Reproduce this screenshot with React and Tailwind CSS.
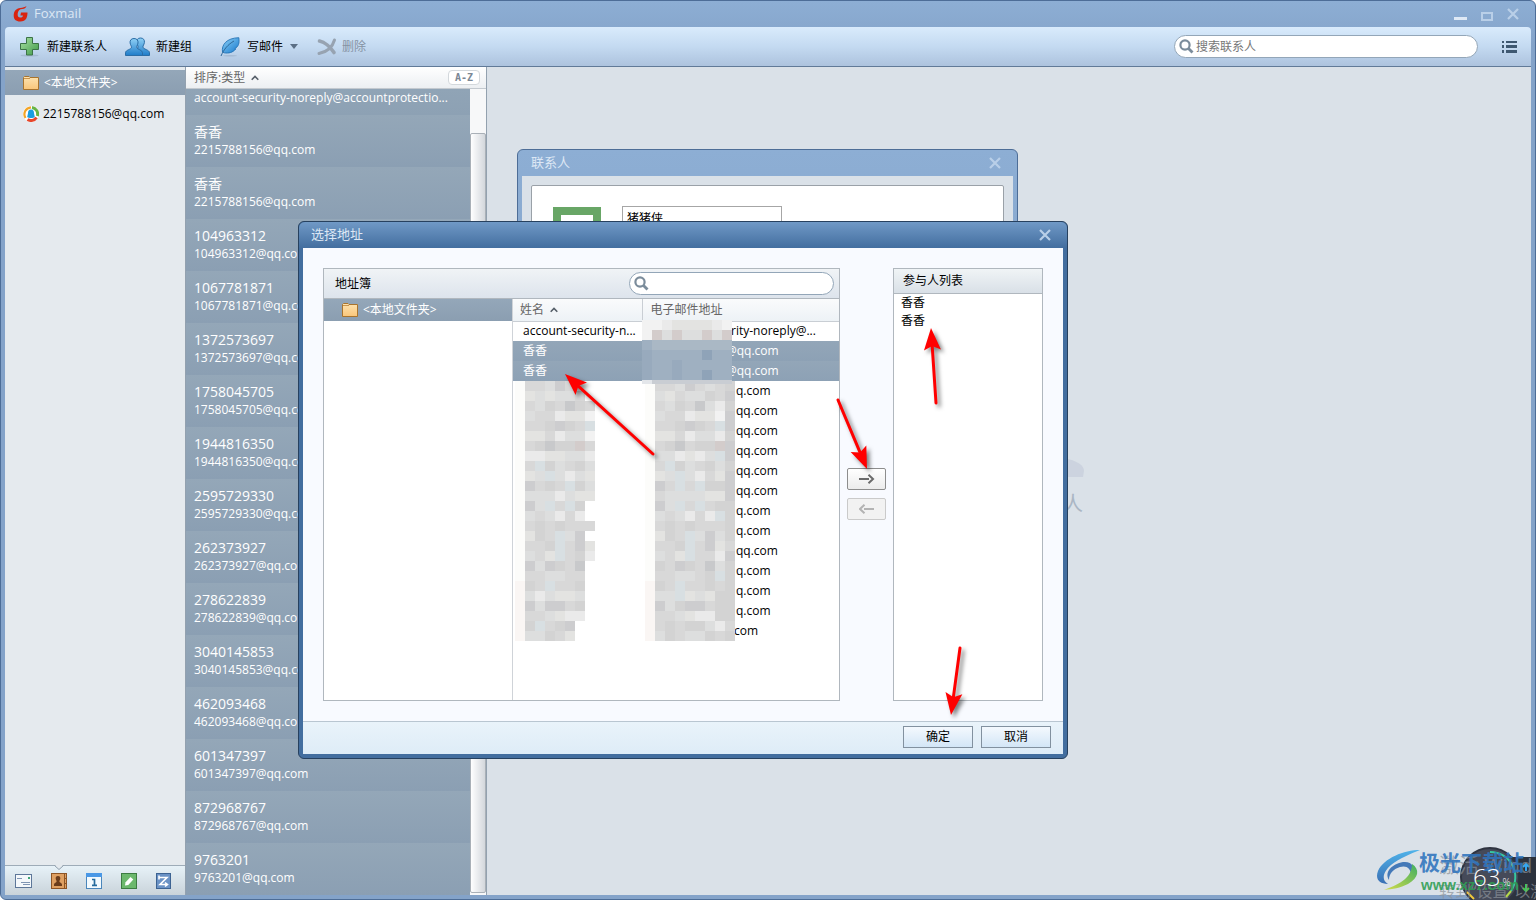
import { useState } from 'react';

const FONT = "font-['Open_Sans','Noto_Sans_CJK_SC',sans-serif]";

const contacts = [
  { name: '香香', mail: '2215788156@qq.com' },
  { name: '香香', mail: '2215788156@qq.com' },
  { name: '104963312', mail: '104963312@qq.com' },
  { name: '1067781871', mail: '1067781871@qq.com' },
  { name: '1372573697', mail: '1372573697@qq.com' },
  { name: '1758045705', mail: '1758045705@qq.com' },
  { name: '1944816350', mail: '1944816350@qq.com' },
  { name: '2595729330', mail: '2595729330@qq.com' },
  { name: '262373927', mail: '262373927@qq.com' },
  { name: '278622839', mail: '278622839@qq.com' },
  { name: '3040145853', mail: '3040145853@qq.com' },
  { name: '462093468', mail: '462093468@qq.com' },
  { name: '601347397', mail: '601347397@qq.com' },
  { name: '872968767', mail: '872968767@qq.com' },
  { name: '9763201', mail: '9763201@qq.com' },
];

const addressRows = [
  { name: 'account-security-n...', mail: 'rity-noreply@...', pad: 'pl-[89px]' },
  { name: '香香', mail: '@qq.com', pad: 'pl-[84px]', selected: true },
  { name: '香香', mail: '@qq.com', pad: 'pl-[84px]', selected: true },
  ...['q.com', 'qq.com', 'qq.com', 'qq.com', 'qq.com', 'qq.com', 'q.com', 'q.com', 'qq.com', 'q.com', 'q.com', 'q.com'].map(
    (mail) => ({ name: '', mail, pad: 'pl-[94px]' })
  ),
  { name: '', mail: 'com', pad: 'pl-[92px]' },
];

// Pixelated blocks that hide names and addresses, one letter per 10px cell
const shades = {
  a: '#fcfcfa', b: '#faf6f4', 0: '#c8c9cb', 1: '#cdcdcf', 2: '#d3d3d3', 3: '#d8d8d8', 4: '#dddede',
  5: '#e3e3e1', 6: '#eaeaea', 7: '#f2f2f2', p: '#d3cccb', c: '#d8dfe2',
  x: '#9fb0c1', y: '#98aabd', z: '#aab8c5', w: '#8fa3b8', v: '#a4b3c5', q: '#c9cdd3', r: '#e3e6ea',
};

const nameBlocks = [
  'a33413..', 'a545443.', 'a3423023', 'a4336557', 'a332123c', 'a5536447', 'a32022p3', 'a6655446',
  'a3c24324', 'a54c4645', 'a1323c24', 'a4446455', 'a14c3c2.', 'a434636.', 'a3232333', 'a523c41.',
  'a332c315', 'a435c326', 'a141230.', 'a334433.', 'b23c332.', 'b464554.', 'b141132.', 'b334566.',
  'b2c321..', 'b44235..',
];

const mailBlocks = [
  'a33413432', 'a45344231', 'a34230462', 'a43365571', 'a332123c1', 'a55364462', 'a320322p1', 'a446564c1',
  'a3c243242', 'a54c46351', 'a13c3c221', 'a34444551', 'a14c3c322', 'a434636c2', 'a32323332', 'a523c4142',
  'a332c3153', 'a435c3361', 'a23123042', 'a334432c2', 'b23c33232', 'b44c54522', 'b142113224', 'b334566221',
  'b32322463', 'b42344232',
].map((row) => row.slice(0, 9));

const headBlocks = ['776555567', '7p4p44p4p', 'xzzzzzzzz', 'yxxxxxwxx', 'yxxyxxxxx', 'yxxyxxwxx', 'rqqqqqqqq'];

function Blocks({ rows, height, className }) {
  return (
    <svg
      className={`absolute pointer-events-none ${className}`}
      width={rows[0].length * 10}
      height={height ?? rows.length * 10}
      shapeRendering="crispEdges"
      aria-hidden="true"
    >
      {rows.map((row, y) =>
        row.split('').map((s, x) =>
          s === '.' ? null : <rect key={`${x}-${y}`} x={x * 10} y={y * 10} width="10" height="10" fill={shades[s]} />
        )
      )}
    </svg>
  );
}

function CloseIcon() {
  return (
    <svg width="12" height="12" viewBox="0 0 12 12" stroke="#b9cfe8" strokeWidth="2.2" aria-hidden="true">
      <path d="M1 1l10 10M11 1L1 11" />
    </svg>
  );
}

function SearchIcon() {
  return (
    <svg width="15" height="15" viewBox="0 0 15 15" fill="none" stroke="#7b8c9b" strokeWidth="2.2" aria-hidden="true">
      <circle cx="6" cy="6" r="4.6" />
      <path d="M9.5 9.5l4 4" strokeWidth="2.8" />
    </svg>
  );
}

function FolderIcon() {
  return (
    <svg width="16" height="14" viewBox="0 0 16 14" aria-hidden="true">
      <defs>
        <linearGradient id="folder" x1="0" y1="0" x2="0" y2="1">
          <stop offset="0" stopColor="#fde3b0" />
          <stop offset="1" stopColor="#f9c67a" />
        </linearGradient>
      </defs>
      <path d="M.5 13.5V1.500l1-1h4.500l1 1h8.500v12z" fill="url(#folder)" stroke="#a8742e" />
      <path d="M1 2.500h6" stroke="#c9944d" />
    </svg>
  );
}

function SortCaret() {
  return (
    <svg width="8" height="6" viewBox="0 0 8 6" fill="none" stroke="#555e68" strokeWidth="1.600" aria-hidden="true">
      <path d="M.7 4.800L4 1.500l3.300 3.300" />
    </svg>
  );
}

function FoxmailLogo() {
  return (
    <svg width="16" height="16" viewBox="0 0 16 16" aria-hidden="true">
      <path
        d="M13.500 0c-.6 2.100-2 3-4.200 3.100C6.600 3.200 5 4.800 4.700 7.600c-.3 2.600.5 3.900 2.600 3.900 1.600 0 2.500-.6 2.700-2H7.400l.6-2.900h6.500c0 1.600-.2 4.200-1.200 6-1.100 2-3.200 2.900-6 2.900C2.700 15.500.6 13.300.7 9.500.8 5 3.200 2.300 7.200 1.900c2.700-.2 4.700-.6 6.300-1.900z"
        fill="#d9230f"
      />
    </svg>
  );
}

function PlusIcon() {
  return (
    <svg width="19" height="20" viewBox="0 0 19 20" aria-hidden="true">
      <defs>
        <linearGradient id="plus" x1="0" y1="0" x2="1" y2="1">
          <stop offset="0" stopColor="#a9e0a4" />
          <stop offset="1" stopColor="#3f9a48" />
        </linearGradient>
      </defs>
      <ellipse cx="9.500" cy="18.500" rx="9" ry="1" fill="#8fa6bd" opacity=".5" />
      <path d="M6.500 .5h6v6h6v6h-6v5.500h-6v-5.500h-6v-6h6z" fill="url(#plus)" stroke="#3c7346" />
    </svg>
  );
}

function PeopleIcon() {
  return (
    <svg width="25" height="20" viewBox="0 0 25 20" aria-hidden="true">
      <defs>
        <linearGradient id="people" x1="0" y1="0" x2="0" y2="1">
          <stop offset="0" stopColor="#8fd0f5" />
          <stop offset="1" stopColor="#1f7cc9" />
        </linearGradient>
      </defs>
      <g fill="url(#people)" stroke="#2b6da6">
        <path d="M15.500 1c-2.800 0-4.100 1.900-3.700 4.600.3 2 1.300 3 1.300 4.400 0 2-3.100 2.500-3.100 4.500v4h14.500v-2.800c0-2.900-6.600-3.500-6.600-5.700 0-1.400 1.200-2.400 1.500-4.400C19.800 2.900 18.300 1 15.500 1z" />
        <path d="M9 1.500C6.200 1.500 4.700 3.400 5.100 6c.3 2 1.400 3 1.400 4.200C6.500 12.500.5 12.800.5 15.800v2.700h17v-2.700c0-3.100-5.900-3.400-5.900-5.600 0-1.200 1.100-2.200 1.400-4.200.4-2.600-1.200-4.500-4-4.500z" />
      </g>
    </svg>
  );
}

function FeatherIcon() {
  return (
    <svg width="20" height="20" viewBox="0 0 20 20" aria-hidden="true">
      <defs>
        <linearGradient id="feather" x1="0" y1="0" x2="1" y2="1">
          <stop offset="0" stopColor="#8fd2f7" />
          <stop offset="1" stopColor="#1578cd" />
        </linearGradient>
      </defs>
      <ellipse cx="10" cy="18.700" rx="7" ry=".8" fill="#8fa6bd" opacity=".5" />
      <path d="M2.500 15C1.300 8 6.500 1 18.800.7c.8 5.500-.3 9-4 10.800l1 .4c-3 3.700-7.200 4.600-11.500 3.900z" fill="url(#feather)" stroke="#2473b4" strokeWidth=".9" />
      <path d="M1 19C4 12 8 7.500 14 4" fill="none" stroke="#2d6798" />
    </svg>
  );
}

function DeleteIcon() {
  return (
    <svg width="20" height="18" viewBox="0 0 20 18" fill="none" stroke="#97a3b1" strokeLinecap="round" aria-hidden="true">
      <path d="M2.500 3c5 1 11 6 14.500 11.500" strokeWidth="3.600" />
      <path d="M17.500 2c-2 7-8 12-15.500 13.500" strokeWidth="3" />
    </svg>
  );
}

function ToolButton({ icon, label, className, disabled, children }) {
  return (
    <button disabled={disabled} className={`flex items-center ${disabled ? 'text-[#8592a3]' : 'text-black'} ${className}`}>
      {icon}
      <span>{label}</span>
      {children}
    </button>
  );
}

function TitleBar() {
  return (
    <header className="flex h-[26px] shrink-0 items-center pl-2 pr-3 text-[13px] text-[#dce7f4]">
      <FoxmailLogo />
      <h1 className="ml-[5px]">Foxmail</h1>
      <div className="ml-auto flex items-center gap-3.5">
        <button aria-label="最小化" className="flex h-3 items-end">
          <span className="block h-[3px] w-[13px] bg-[#dfe9f5]" />
        </button>
        <button aria-label="最大化" className="mt-1 h-[9px] w-3 border-2 border-[#b9cfe8]" />
        <button aria-label="关闭">
          <CloseIcon />
        </button>
      </div>
    </header>
  );
}

function Toolbar() {
  return (
    <div className="flex h-10 shrink-0 items-center rounded-t-sm border-b border-[#617a98] bg-linear-to-b from-[#d9ebfc] via-[#c4daf1] to-[#adc3de] pl-[15px]">
      <ToolButton icon={<PlusIcon />} label="新建联系人" className="gap-2" />
      <ToolButton icon={<PeopleIcon />} label="新建组" className="ml-[18px] gap-1.5" />
      <ToolButton icon={<FeatherIcon />} label="写邮件" className="ml-7 gap-[7px]">
        <svg width="8" height="5" viewBox="0 0 8 5" aria-hidden="true">
          <path d="M0 0h8L4 5z" fill="#5b6f85" />
        </svg>
      </ToolButton>
      <ToolButton icon={<DeleteIcon />} label="删除" disabled className="ml-[19px] gap-[5px]" />
      <label className="ml-auto mr-6 flex h-[23px] w-[304px] items-center gap-0.5 rounded-full border border-[#93a6b8] bg-white pl-1">
        <SearchIcon />
        <input
          type="search"
          aria-label="搜索联系人"
          placeholder="搜索联系人"
          className="min-w-0 flex-1 bg-transparent text-xs outline-none placeholder:text-[#777]"
        />
      </label>
      <button aria-label="列表视图" className="mr-3.5">
        <svg width="15" height="12" viewBox="0 0 15 12" fill="#3e5871" shapeRendering="crispEdges" aria-hidden="true">
          <path d="M0 0h2v2H0zM4 0h11v2H4zM0 4h2v3H0zM4 4h11v3H4zM0 9h2v3H0zM4 9h11v3H4z" />
        </svg>
      </button>
    </div>
  );
}

function ModuleIcons() {
  return (
    <nav className="relative flex h-[30px] shrink-0 items-center gap-[19px] border-t border-[#9eacb8] bg-linear-to-b from-[#e7f2f8] to-[#c9d3da] pl-2.5">
      <svg className="absolute left-[49px] -top-px" width="10" height="6" viewBox="0 0 10 6" aria-hidden="true">
        <path d="M1 0l4 4 4-4z" fill="#e5eaee" />
        <path d="M.5 .5l4.500 4 4.500-4" fill="none" stroke="#8f9daa" />
      </svg>
      <button aria-label="邮件">
        <svg width="17" height="14" viewBox="0 0 17 14">
          <rect x=".5" y=".5" width="16" height="13" fill="#f4f8fb" stroke="#5d7799" />
          <path d="M2 4.500h5M6 8.500h9M8 10.500h7" stroke="#7f96b4" />
          <path d="M13 3h2v2h-2z" fill="#3fa778" />
        </svg>
      </button>
      <button aria-label="联系人">
        <svg width="16" height="16" viewBox="0 0 16 16">
          <rect x=".5" y=".5" width="15" height="15" fill="#dfa062" stroke="#8d5526" />
          <path d="M13.500 1v14M14 5.500h2M14 10.500h2" stroke="#8d5526" />
          <path d="M7 3c-1.800 0-2.500 1.200-2.300 2.700C4.900 7 5.600 7.400 5.600 8.500c0 1-2.600 1.200-2.600 3V13h8v-1.500c0-1.800-2.600-2-2.600-3 0-1.100.7-1.500.9-2.800C9.500 4.200 8.800 3 7 3z" fill="#6b3d1c" />
        </svg>
      </button>
      <button aria-label="日历">
        <svg width="16" height="16" viewBox="0 0 16 16">
          <rect x=".5" y=".5" width="15" height="15" fill="#f3fafe" stroke="#4a86bb" />
          <rect x="0" y="0" width="16" height="4" fill="#4a98e6" />
          <path d="M6 6.500h2.500V12M6 12.300h5" stroke="#276b9d" strokeWidth="1.700" fill="none" />
        </svg>
      </button>
      <button aria-label="记事本">
        <svg width="16" height="16" viewBox="0 0 16 16">
          <rect x=".5" y=".5" width="15" height="15" fill="#6cb86d" stroke="#3d7c42" />
          <path d="M4 12.500l.6-3.200L9.500 4l2.800 2.600-5 5.300z" fill="#fff" />
        </svg>
      </button>
      <button aria-label="阅读">
        <svg width="15" height="16" viewBox="0 0 15 16">
          <rect x=".5" y=".5" width="14" height="15" fill="#6a92c5" stroke="#3d6392" />
          <path d="M3 4.500h8L4 11.500h7.500M9 9.500l2.500 2L9 13.500M3 2.500v4" stroke="#fff" strokeWidth="1.600" fill="none" />
        </svg>
      </button>
    </nav>
  );
}

function Sidebar() {
  return (
    <aside className="flex w-[180px] shrink-0 flex-col bg-[#e5eaee]">
      <a href="#local" className="mt-[3px] flex h-[25px] items-center gap-[5px] bg-linear-to-b from-[#94a7b9] to-[#8b9eb1] pl-[18px] text-white">
        <FolderIcon />
        &lt;本地文件夹&gt;
      </a>
      <a href="#account" className="mt-1.5 flex h-[25px] items-center gap-1 pl-[18px] text-black">
        <svg width="16" height="16" viewBox="0 0 16 16" fill="none" aria-hidden="true">
          <circle cx="8" cy="8" r="8" fill="#fff" />
          <path d="M9 1.500a6.500 6.500 0 0 1 5.300 8.500" stroke="#67b443" strokeWidth="3" />
          <path d="M13.500 11.500A6.500 6.500 0 0 1 4.500 13.500" stroke="#e8472b" strokeWidth="3" />
          <path d="M2.500 12A7 7 0 0 1 8 1.300" stroke="#f3a528" strokeWidth="2.200" />
          <path d="M8 3.500c2.500 0 3 1.800 3 3.800l.8 3.700c-1.500 1.300-6 1.300-7.600 0L5 7.300c0-2 .5-3.800 3-3.800z" fill="#199de0" />
        </svg>
        2215788156@qq.com
      </a>
      <div className="flex-1" />
      <ModuleIcons />
    </aside>
  );
}

function ContactList() {
  return (
    <section className="flex w-[302px] shrink-0 flex-col border-x border-[#93a1af]">
      <div className="flex h-[22px] shrink-0 items-center border-b border-[#c3c9cf] bg-linear-to-b from-white to-[#eceff2] pl-2 pr-1.5 text-[#666]">
        排序:类型
        <span className="ml-1.5">
          <SortCaret />
        </span>
        <button className="ml-auto h-[15px] w-8 rounded-sm border border-[#d3d8dc] bg-white font-['DejaVu_Sans_Mono',monospace] text-[10px] leading-3 font-bold text-[#7b8794]">
          A-Z
        </button>
      </div>
      <div className="flex min-h-0 flex-1">
        <ul className="min-w-0 flex-1 overflow-hidden bg-[#8fa3b6] text-white">
          <li className="h-[26px] truncate bg-linear-to-b from-[#90a4b6] to-[#8da1b4] px-2 leading-[18px]">
            account-security-noreply@accountprotectio...
          </li>
          {contacts.map((c, i) => (
            <li key={i} className="h-[52px] bg-linear-to-b from-[#94a7b8] to-[#8b9fb3] px-2 pt-2">
              <p className="text-sm leading-[18px]">{c.name}</p>
              <p className="leading-[18px]">{c.mail}</p>
            </li>
          ))}
        </ul>
        <div className="flex w-4 shrink-0 flex-col bg-[#f7f8f9] pb-0.5">
          <div className="h-11 shrink-0" />
          <div className="flex-1 rounded-xs border border-[#a9b0b7] bg-linear-to-r from-white to-[#d3d7dc]" />
        </div>
      </div>
    </section>
  );
}

function ContactDialog() {
  return (
    <section className="absolute left-[517px] top-[149px] h-60 w-[501px] rounded-t-md border border-[#4d6d97] bg-linear-to-b from-[#8daed4] to-[#84a3c9] px-1">
      <header className="flex h-[26px] items-center justify-between pl-[9px] pr-3 text-[13px] text-[#dce7f4]">
        <h2>联系人</h2>
        <button aria-label="关闭">
          <CloseIcon />
        </button>
      </header>
      <div className="h-48 bg-[#dae1e8] px-[9px] pt-[9px]">
        <div className="flex h-40 items-start rounded-t-xs border border-[#9aa1a8] bg-white pl-[21px] pt-5">
          <div className="mt-px h-12 w-12 border-8 border-[#68a666]" />
          <input
            aria-label="姓名"
            defaultValue="猪猪侠"
            className="ml-[21px] h-6 w-40 border border-[#a6a6a6] bg-white px-1 text-xs text-black"
          />
        </div>
      </div>
    </section>
  );
}

function AddressBook() {
  return (
    <div className="flex min-w-0 flex-1 flex-col border border-[#b0b7be] bg-white">
      <div className="flex h-[30px] shrink-0 items-center justify-between border-b border-[#b0b7be] bg-linear-to-b from-[#f0f3f6] to-[#dde4ec] pl-[11px] pr-[5px] text-black">
        <h3>地址簿</h3>
        <label className="flex h-[23px] w-[205px] items-center gap-1 rounded-full border border-[#93a6b8] bg-white pl-1">
          <SearchIcon />
          <input type="search" aria-label="搜索地址簿" className="min-w-0 flex-1 bg-transparent text-xs outline-none" />
        </label>
      </div>
      <div className="flex min-h-0 flex-1">
        <div className="w-[189px] shrink-0 border-r border-[#cfd3d8]">
          <a href="#book" className="flex h-[22px] items-center gap-[5px] bg-linear-to-b from-[#94a7b9] to-[#8b9eb1] pl-[18px] text-white">
            <FolderIcon />
            &lt;本地文件夹&gt;
          </a>
        </div>
        <div className="relative min-w-0 flex-1">
          <table className="w-full table-fixed border-collapse text-left">
            <thead>
              <tr className="h-[22px] bg-linear-to-b from-[#fafbfc] to-[#edf2f6] text-[#666]">
                <th className="w-[129px] border-r border-b border-[#c9ced4] p-0 pl-[7px] font-normal">
                  <span className="flex items-center gap-1.5">
                    姓名 <SortCaret />
                  </span>
                </th>
                <th className="border-b border-[#c9ced4] p-0 pl-2 font-normal">电子邮件地址</th>
              </tr>
            </thead>
            <tbody>
              {addressRows.map((row, i) => (
                <tr key={i} className={`h-5 ${row.selected ? 'bg-linear-to-b from-[#93a6b8] to-[#8da1b5] text-white' : 'text-black'}`}>
                  <td className="p-0 pl-2.5 whitespace-nowrap">{row.name}</td>
                  <td className={`p-0 whitespace-nowrap ${row.pad}`}>{row.mail}</td>
                </tr>
              ))}
            </tbody>
          </table>
          <Blocks rows={nameBlocks} className="left-0.5 top-[82px]" />
          <Blocks rows={mailBlocks} className="left-[132px] top-[82px]" />
          <Blocks rows={headBlocks} height={64} className="left-[129px] top-[21px]" />
        </div>
      </div>
    </div>
  );
}

function PickAddressDialog({ onClose }) {
  const arrowBtn = 'flex h-[22px] w-[39px] items-center justify-center rounded-xs border';
  const footBtn = 'h-[22px] w-[70px] border border-[#82919f] bg-linear-to-b from-[#f4f9fe] to-[#d3e6f6] text-black';

  return (
    <section
      role="dialog"
      aria-label="选择地址"
      className="absolute left-[298px] top-[221px] w-[770px] rounded-md border border-[#27415f] bg-[#436e9f] px-1 pb-1"
    >
      <header className="-mx-1 flex h-[26px] items-center justify-between rounded-t-md bg-linear-to-b from-[#7099c6] to-[#436e9f] pl-3 pr-4 text-[13px] text-[#dce7f4]">
        <h2>选择地址</h2>
        <button aria-label="关闭" onClick={onClose}>
          <CloseIcon />
        </button>
      </header>
      <div className="flex h-[473px] bg-[#f8faff] p-5">
        <AddressBook />
        <div className="flex w-[53px] shrink-0 flex-col items-center gap-2 pt-[200px]">
          <button aria-label="添加" className={`${arrowBtn} border-[#8d8d8d] bg-linear-to-b from-white to-[#ececec]`}>
            <svg width="16" height="10" viewBox="0 0 16 10" fill="none" stroke="#6b6b6b" strokeWidth="2" aria-hidden="true">
              <path d="M0 5h10M9.500 .8L14 5 9.500 9.200" />
            </svg>
          </button>
          <button aria-label="移除" disabled className={`${arrowBtn} border-[#cacaca] bg-[#f2f2f2]`}>
            <svg width="16" height="10" viewBox="0 0 16 10" fill="none" stroke="#b3b3b3" strokeWidth="2" aria-hidden="true">
              <path d="M15 5H5M5.500 .8L1 5l4.500 4.200" />
            </svg>
          </button>
        </div>
        <div className="w-[150px] shrink-0 border border-[#b0b7be] bg-white text-black">
          <h3 className="flex h-[25px] items-center border-b border-[#b0b7be] bg-linear-to-b from-[#f0f4f6] to-[#d9e0e7] pl-[9px]">
            参与人列表
          </h3>
          <ul className="pl-[7px] leading-[18px]">
            <li>香香</li>
            <li>香香</li>
          </ul>
        </div>
      </div>
      <footer className="flex h-[33px] items-start justify-end gap-2 border-t border-[#b9c6d1] bg-linear-to-b from-[#e9f3fa] to-[#deecf7] pt-1 pr-3">
        <button className={footBtn} onClick={onClose}>
          确定
        </button>
        <button className={footBtn} onClick={onClose}>
          取消
        </button>
      </footer>
    </section>
  );
}

const arrows = [
  { from: [653, 454], to: [565, 374] },
  { from: [838, 400], to: [867, 469] },
  { from: [936, 403], to: [931, 328] },
  { from: [960, 648], to: [951, 715] },
];

function Arrows() {
  return (
    <svg className="pointer-events-none absolute inset-0 h-full w-full drop-shadow-[3px_3px_2px_rgba(0,0,0,0.5)]" aria-hidden="true">
      {arrows.map(({ from, to }, i) => {
        const dx = to[0] - from[0];
        const dy = to[1] - from[1];
        const len = Math.hypot(dx, dy);
        const deg = (Math.atan2(dy, dx) * 180) / Math.PI;
        return (
          <g key={i} transform={`translate(${from[0]} ${from[1]}) rotate(${deg})`} fill="#f00">
            <path d={`M0 0H${len - 15}`} stroke="#f00" strokeWidth="3" strokeLinecap="round" />
            <path d={`M${len} 0l-22 -8.500 4 8.500 -4 8.500z`} />
          </g>
        );
      })}
    </svg>
  );
}

function CornerMarks() {
  return (
    <div className="pointer-events-none absolute right-0 bottom-0 h-[54px] w-[160px] overflow-hidden whitespace-nowrap">
      <svg className="absolute right-0 bottom-0" width="160" height="54" viewBox="0 0 160 54" aria-hidden="true">
        <defs>
          <linearGradient id="swirl" x1="0" y1="0" x2="0" y2="1">
            <stop offset="0" stopColor="#4fb3ea" />
            <stop offset="1" stopColor="#3a6fb4" />
          </linearGradient>
          <linearGradient id="tail" x1="1" y1="0" x2="0" y2="1">
            <stop offset="0" stopColor="#3fae62" />
            <stop offset="1" stopColor="#d5dc4a" />
          </linearGradient>
        </defs>
        <path d="M130 11h30v43h-30z" fill="#2c323d" />
        <circle cx="114" cy="31" r="29" fill="#454a59" stroke="#2f3440" strokeWidth="2" />
        <path d="M114 6a25 25 0 0 1 21 39" fill="none" stroke="#37c8a0" strokeWidth="2" />
        <path d="M135 45l-5 6" stroke="#b5d84a" strokeWidth="2" />
        <path d="M91 46l7 7" stroke="#f0c93a" strokeWidth="2" />
        <path d="M150 25v-7m-3 3l3-3 3 3" fill="none" stroke="#35a7f0" strokeWidth="2" />
        <path d="M150 38v7m-3-3l3 3 3-3" fill="none" stroke="#3ecb4a" strokeWidth="2" />
        <path d="M44 4C28 4 8 12 2 25c-3 8 1 13 10 13-7-4-5-12 3-19C24 12 34 8 44 4z" fill="url(#swirl)" />
        <path d="M13 34c-5-8 3-16 14-18 9-1 13 5 8 13 0-7-5-10-11-8-7 2-11 7-11 13z" fill="#4479b8" />
        <path d="M36 18c8 5 7 14-4 20-8 4-15 5-24 6 13-5 28-11 28-26z" fill="url(#tail)" />
      </svg>
      <p className="absolute left-[63px] top-2 text-xl leading-6 text-[#8c9299]/70">激活 Wind</p>
      <p className="absolute left-[63px] top-[33px] text-base leading-6 text-[#8c9299]/70">转到“设置”以激</p>
      <p className="absolute left-[43px] top-0 text-[21px] leading-8 font-bold text-[#2f74bd]/90">极光下载站</p>
      <p className="absolute left-[45px] top-[29px] font-['Liberation_Sans',sans-serif] text-[15px] leading-5 font-bold text-[#2f9e54]/90">www.xz7.com</p>
      <p className="absolute left-[97px] top-[17px] text-2xl leading-7 font-light text-white">
        63<span className="ml-0.5 text-[10px]">%</span>
      </p>
    </div>
  );
}

export default function App() {
  const [picking, setPicking] = useState(true);

  return (
    <div className={`relative h-screen overflow-hidden bg-white text-xs ${FONT}`}>
      <main className="flex h-full flex-col rounded-md border border-[#4d6d97] bg-linear-to-b from-[#8daed4] to-[#84a3c9] to-5% px-1 pb-1">
        <TitleBar />
        <Toolbar />
        <div className="flex min-h-0 flex-1 bg-[#dae1e8]">
          <Sidebar />
          <ContactList />
          <div className="flex-1" />
        </div>
      </main>
      <svg className="absolute left-[1040px] top-[456px]" width="44" height="22" aria-hidden="true">
        <path d="M0 21V0c20 0 44 4 44 15l-1 6z" fill="#ccd3df" />
      </svg>
      <p className="absolute left-[1063px] top-[492px] text-xl leading-6 text-[#aab6c4]">人</p>
      <ContactDialog />
      {picking && <PickAddressDialog onClose={() => setPicking(false)} />}
      <Arrows />
      <CornerMarks />
    </div>
  );
}
